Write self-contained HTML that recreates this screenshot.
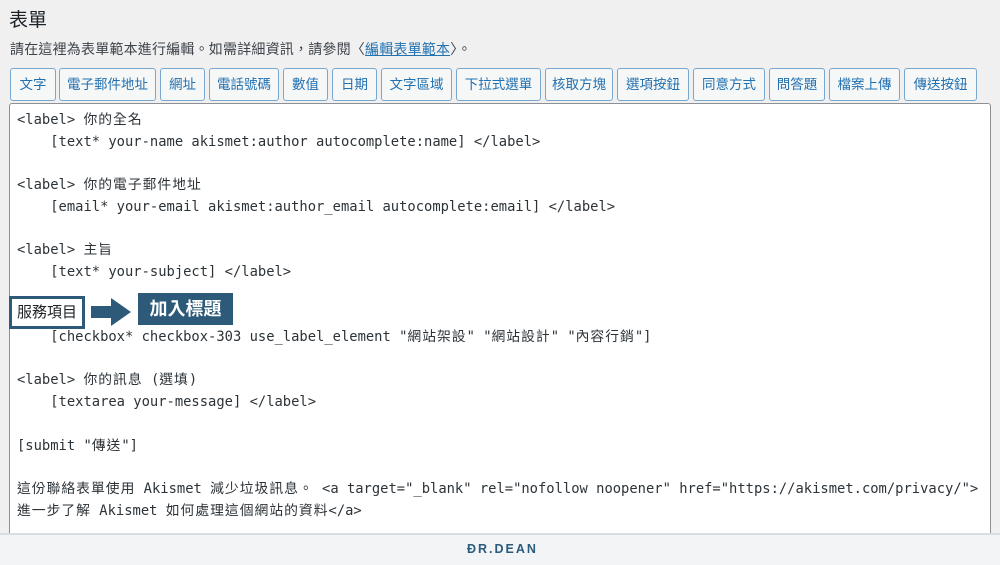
<!DOCTYPE html><html><head><meta charset="utf-8"><style>
body{margin:0;width:1000px;height:563px;background:#f0f0f1;font-family:"Liberation Sans","Noto Sans CJK TC",sans-serif;color:#1d2327;position:relative;overflow:hidden}
h1{position:absolute;left:9px;top:5px;margin:0;font-size:19px;font-weight:400}
.d{position:absolute;left:10px;top:39px;font-size:14px;color:#3c434a;letter-spacing:0.2px}
.d a{color:#2271b1}
.b{position:absolute;top:68px;height:31px;border:1px solid #7aa7cf;border-radius:3px;background:#f6f7f7;color:#2271b1;font-size:13.5px;line-height:31px;text-align:center;box-sizing:content-box}
.ta{position:absolute;left:9px;top:103px;width:980px;height:440px;background:#fff;border:1px solid #8c8f94;border-radius:3px}
pre{position:absolute;left:17px;top:110px;margin:0;font-family:"DejaVu Sans Mono","Noto Sans CJK TC",monospace;font-size:13.8px;line-height:21.7px;color:#2c3338}
.c{letter-spacing:1px}
.foot{position:absolute;left:0;top:533px;width:1000px;height:30px;background:#f3f4f5;border-top:2px solid #d5dde5}
.logo{position:absolute;left:467px;top:7px;font-size:12.5px;font-weight:700;color:#2b5b7d;letter-spacing:2px}
.o1{position:absolute;left:9px;top:296px;width:70px;height:27px;border:3px solid #2c5a78;background:#fff;font-size:15px;line-height:27px;text-align:center;color:#1d2327}
.o2{position:absolute;left:138px;top:293px;width:95px;height:32px;background:#2c5a78;color:#fff;font-weight:700;font-size:18px;line-height:32px;text-align:center}
</style></head><body>
<h1>表單</h1>
<div class="d">請在這裡為表單範本進行編輯。如需詳細資訊，請參閱〈<a href="#">編輯表單範本</a>〉。</div>
<div class="b" style="left:10px;width:44px">文字</div>
<div class="b" style="left:59px;width:95px">電子郵件地址</div>
<div class="b" style="left:160px;width:43px">網址</div>
<div class="b" style="left:209px;width:68px">電話號碼</div>
<div class="b" style="left:283px;width:43px">數值</div>
<div class="b" style="left:332px;width:43px">日期</div>
<div class="b" style="left:381px;width:69px">文字區域</div>
<div class="b" style="left:456px;width:83px">下拉式選單</div>
<div class="b" style="left:545px;width:66px">核取方塊</div>
<div class="b" style="left:617px;width:70px">選項按鈕</div>
<div class="b" style="left:693px;width:70px">同意方式</div>
<div class="b" style="left:769px;width:54px">問答題</div>
<div class="b" style="left:829px;width:69px">檔案上傳</div>
<div class="b" style="left:904px;width:71px">傳送按鈕</div>
<div class="ta"></div>
<pre>&lt;label&gt; <span class="c">你的全名</span>
    [text* your-name akismet:author autocomplete:name] &lt;/label&gt;

&lt;label&gt; <span class="c">你的電子郵件地址</span>
    [email* your-email akismet:author_email autocomplete:email] &lt;/label&gt;

&lt;label&gt; <span class="c">主旨</span>
    [text* your-subject] &lt;/label&gt;


    [checkbox* checkbox-303 use_label_element "<span class="c">網站架設</span>" "<span class="c">網站設計</span>" "<span class="c">內容行銷</span>"]

&lt;label&gt; <span class="c">你的訊息</span> (<span class="c">選填</span>)
    [textarea your-message] &lt;/label&gt;

[submit "<span class="c">傳送</span>"]

<span class="c">這份聯絡表單使用</span> Akismet <span class="c">減少垃圾訊息。</span> &lt;a target="_blank" rel="nofollow noopener" href="https://akismet.com/privacy/"&gt;
<span class="c">進一步了解</span> Akismet <span class="c">如何處理這個網站的資料</span>&lt;/a&gt;</pre>
<div class="o1">服務項目</div>
<svg style="position:absolute;left:91px;top:298px" width="40" height="28" viewBox="0 0 40 28"><path d="M0 8H20V0L40 14 20 28V20H0Z" fill="#2c5a78"/></svg>
<div class="o2">加入標題</div>
<div class="foot"><div class="logo">ĐR.DEAN</div></div>
</body></html>
